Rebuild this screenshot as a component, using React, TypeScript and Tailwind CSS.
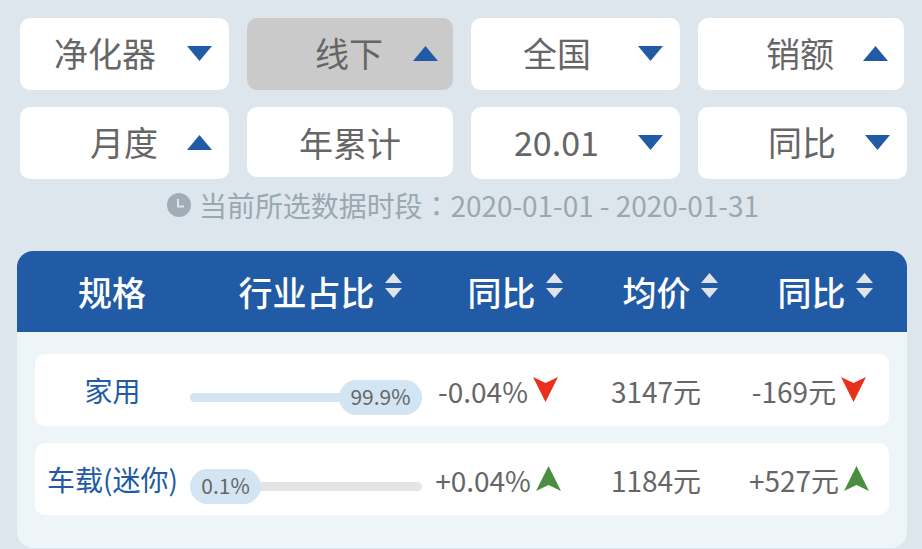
import React from "react";

const cjk = "font-['Noto_Sans_CJK_SC','Noto_Sans',sans-serif]";

function Caret({ up }: { up?: boolean }) {
  return (
    <svg width="25" height="15" viewBox="0 0 25 15" className="shrink-0">
      <path d={up ? "M12.5 0 L25 15 L0 15 Z" : "M0 0 L25 0 L12.5 15 Z"} fill="#215ba6" />
    </svg>
  );
}

function SortIcon() {
  return (
    <svg width="17" height="25" viewBox="0 0 17 25" className="shrink-0">
      <path d="M8.5 0 L17 10 L0 10 Z" fill="#dfe3e8" />
      <path d="M0 15 L17 15 L8.5 25 Z" fill="#dfe3e8" />
    </svg>
  );
}

function Dart({ up }: { up?: boolean }) {
  return up ? (
    <svg width="25" height="25" viewBox="0 0 25 25" className="shrink-0">
      <path d="M12.5 0 L25 25 L12.5 19 L0 25 Z" fill="#4a8f3f" />
    </svg>
  ) : (
    <svg width="25" height="25" viewBox="0 0 25 25" className="shrink-0">
      <path d="M0 0 L12.5 6 L25 0 L12.5 25 Z" fill="#e8301c" />
    </svg>
  );
}

function Filter({
  label,
  up,
  width,
  pad,
  gray,
}: {
  label: string;
  up?: boolean;
  width: string;
  pad: string;
  gray?: boolean;
}) {
  return (
    <div
      className={`${width} ${pad} h-[72px] rounded-[10px] flex items-center text-[34px] text-[#666] ${
        gray ? "bg-[#cacaca]" : "bg-white"
      }`}
    >
      <span className="leading-none mt-[-2px]">{label}</span>
      <span className="ml-auto mb-[2px]">
        <Caret up={up} />
      </span>
    </div>
  );
}

function Head({ label, width, sort }: { label: string; width: string; sort?: boolean }) {
  return (
    <div className={`${width} flex justify-center items-start gap-[10px]`}>
      <span className="text-[34px] leading-[44px] font-medium text-white">{label}</span>
      {sort && (
        <span className="mt-[3px]">
          <SortIcon />
        </span>
      )}
    </div>
  );
}

function Value({ text, width, dart }: { text: string; width: string; dart?: "up" | "down" }) {
  return (
    <div className={`${width} flex justify-center items-start gap-[5px]`}>
      <span className="text-[28px] leading-[40px] mt-[1px] text-[#666]">{text}</span>
      {dart && (
        <span className="mt-[7px]">
          <Dart up={dart === "up"} />
        </span>
      )}
    </div>
  );
}

export default function App() {
  return (
    <div className={`${cjk} w-[922px] h-[549px] overflow-hidden bg-[#dee6ed]`}>
      <div className="pt-[18px] pl-[20px] flex gap-[18px]">
        <Filter label="净化器" width="w-[209px]" pad="pl-[34px] pr-[17px]" />
        <Filter label="线下" up gray width="w-[206px]" pad="pl-[68px] pr-[15px]" />
        <Filter label="全国" width="w-[209px]" pad="pl-[52px] pr-[17px]" />
        <Filter label="销额" up width="w-[206px]" pad="pl-[68px] pr-[16px]" />
      </div>
      <div className="pt-[17px] pl-[20px] flex items-start gap-[18px]">
        <Filter label="月度" up width="w-[209px]" pad="pl-[70px] pr-[17px]" />
        <div className="w-[206px] h-[70px] rounded-[10px] bg-white flex items-center justify-center text-[34px] text-[#666]">
          年累计
        </div>
        <Filter label="20.01" width="w-[209px]" pad="pl-[43px] pr-[17px]" />
        <Filter label="同比" width="w-[209px]" pad="pl-[70px] pr-[17px]" />
      </div>
      <div className="mt-[6px] pl-[167px] h-[40px] flex items-center gap-[8px]">
        <svg width="24" height="24" viewBox="0 0 24 24" className="shrink-0">
          <circle cx="12" cy="12" r="12" fill="#a0adb6" />
          <path d="M11 6 V13.5 H17" stroke="#dee6ed" strokeWidth="2" fill="none" />
        </svg>
        <span className="text-[28px] leading-none tracking-[-0.06px] text-[#9aa8b0] whitespace-nowrap">
          当前所选数据时段<span className="font-['Noto_Sans_CJK_TC']">：</span>2020-01-01 - 2020-01-31
        </span>
      </div>

      <div className="mt-[26px] ml-[17px] w-[890px] h-[297px] rounded-[16px] overflow-hidden bg-[#edf5f9]">
        <div className="h-[81px] bg-[#215ba6] pt-[19px] flex">
          <Head label="规格" width="w-[190px]" />
          <Head label="行业占比" width="w-[226px]" sort />
          <Head label="同比" width="w-[164px]" sort />
          <Head label="均价" width="w-[146px]" sort />
          <Head label="同比" width="w-[164px]" sort />
        </div>
        <div className="px-[18px] pt-[22px] flex flex-col gap-[17px]">
          <div className="h-[72px] rounded-[10px] bg-white flex items-center">
            <div className="w-[155px] text-center text-[28px] leading-none text-[#215ba6] whitespace-nowrap">
              家用
            </div>
            <div className="w-[232px] relative h-[9px] mt-[14px] rounded-full bg-[#d3e4f2]">
              <div className="absolute right-0 top-[-13px] w-[83px] h-[35px] rounded-full bg-[#d3e4f2] flex items-center justify-center text-[21px] text-[#666]">
                99.9%
              </div>
            </div>
            <Value text="-0.04%" width="w-[152px]" dart="down" />
            <Value text="3147元" width="w-[164px]" />
            <Value text="-169元" width="w-[142px]" dart="down" />
          </div>
          <div className="h-[72px] rounded-[10px] bg-white flex items-center">
            <div className="w-[155px] text-center text-[28px] leading-none text-[#215ba6] whitespace-nowrap">
              车载(迷你)
            </div>
            <div className="w-[232px] relative h-[9px] mt-[14px] rounded-full bg-[#e4e4e4]">
              <div className="absolute left-0 top-[-13px] w-[71px] h-[35px] rounded-full bg-[#d3e4f2] flex items-center justify-center text-[21px] text-[#666]">
                0.1%
              </div>
            </div>
            <Value text="+0.04%" width="w-[152px]" dart="up" />
            <Value text="1184元" width="w-[164px]" />
            <Value text="+527元" width="w-[142px]" dart="up" />
          </div>
        </div>
      </div>
    </div>
  );
}
